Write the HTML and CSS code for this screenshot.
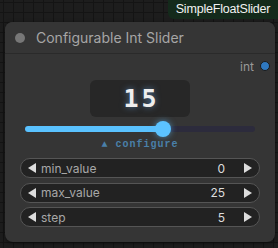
FILE: index.html
```html
<!DOCTYPE html>
<html>
<head>
<meta charset="utf-8">
<link rel="stylesheet" href="styles.css">
</head>
<body>
<div class="canvas">
  <div class="badge">SimpleFloatSlider</div>
  <div class="node">
    <div class="title">
      <span class="title-dot"></span>
      <span class="title-text">Configurable Int Slider</span>
    </div>
    <div class="body">
      <div class="output">
        <span class="output-label">int</span>
        <span class="output-dot"></span>
      </div>
      <div class="display"><span class="display-value">15</span></div>
      <div class="slider">
        <div class="track">
          <div class="fill" style="width: 60%"><span class="thumb"></span></div>
        </div>
      </div>
      <div class="configure">▲ configure</div>
      <div class="widgets">
        <div class="widget">
          <span class="arrow left"></span>
          <span class="w-label">min_value</span>
          <span class="w-value">0</span>
          <span class="arrow right"></span>
        </div>
        <div class="widget">
          <span class="arrow left"></span>
          <span class="w-label">max_value</span>
          <span class="w-value">25</span>
          <span class="arrow right"></span>
        </div>
        <div class="widget">
          <span class="arrow left"></span>
          <span class="w-label">step</span>
          <span class="w-value">5</span>
          <span class="arrow right"></span>
        </div>
      </div>
    </div>
  </div>
</div>
</body>
</html>
```

FILE: styles.css
```css
html, body {
  margin: 0;
  padding: 0;
}
body {
  width: 278px;
  height: 248px;
  overflow: hidden;
  font-family: "Liberation Sans", Arial, sans-serif;
}
.canvas {
  position: relative;
  width: 278px;
  height: 248px;
  background-color: #1d1d1d;
  background-image:
    linear-gradient(to right, #141414 1px, transparent 1px),
    linear-gradient(to bottom, #141414 1px, transparent 1px);
  background-size: 10px 10px;
  background-position: 3px 2px;
  padding-top: 22px;
  padding-left: 5px;
  box-sizing: border-box;
}
.badge {
  position: absolute;
  top: 0;
  right: 0;
  width: 110px;
  height: 19px;
  background: #142a1b;
  color: #f2f2f2;
  font-size: 12.5px;
  line-height: 19px;
  text-align: center;
  border-bottom-left-radius: 6px;
  letter-spacing: -0.2px;
}
.node {
  width: 270px;
  height: 220px;
  background: #353535;
  border-radius: 8px;
  box-shadow: 0 1px 4px rgba(0,0,0,0.5);
  overflow: hidden;
}
.title {
  height: 31px;
  display: flex;
  align-items: center;
  border-bottom: 1px solid #2a2a2a;
  background: #353535;
}
.title-dot {
  width: 10px;
  height: 10px;
  border-radius: 50%;
  background: #777;
  margin-left: 10px;
}
.title-text {
  margin-left: 11px;
  color: #a6a6a6;
  font-family: Inter, "Liberation Sans", sans-serif;
  font-size: 14px;
}
.body {
  display: flex;
  flex-direction: column;
}
.output {
  height: 14px;
  margin-top: 5px;
  display: flex;
  justify-content: flex-end;
  align-items: center;
  padding-right: 5px;
}
.output-label {
  color: #999;
  font-size: 12px;
  font-family: Inter, "Liberation Sans", sans-serif;
}
.output-dot {
  width: 8px;
  height: 8px;
  border-radius: 50%;
  background: #2f78bf;
  border: 1px solid #1a1a1a;
  margin-left: 6px;
}
.display {
  align-self: center;
  width: 100px;
  height: 37px;
  margin-top: 7px;
  background: #272727;
  border-radius: 6px;
  display: flex;
  align-items: center;
  justify-content: center;
}
.display-value {
  font-family: "DejaVu Sans Mono", monospace;
  font-weight: bold;
  font-size: 25px;
  letter-spacing: 3px;
  margin-right: -3px;
  color: #eeeeee;
  text-shadow: 0 0 6px rgba(110, 180, 255, 0.55);
}
.slider {
  height: 16px;
  margin-top: 4px;
  padding-left: 20px;
  display: flex;
  align-items: center;
}
.track {
  width: 230px;
  height: 6px;
  border-radius: 3px;
  background: #2c2b3c;
}
.fill {
  position: relative;
  height: 6px;
  border-radius: 3px;
  background: #5ac2ff;
}
.thumb {
  position: absolute;
  right: -8px;
  top: -5px;
  width: 16px;
  height: 16px;
  border-radius: 50%;
  background: #5cc3ff;
  box-shadow: 0 0 6px rgba(90, 190, 255, 0.6);
}
.configure {
  margin-top: 2px;
  height: 12px;
  line-height: 12px;
  text-align: center;
  font-family: "Liberation Mono", "Courier New", monospace;
  font-weight: bold;
  font-size: 10px;
  letter-spacing: 1px;
  color: #4a80aa;
}
.widgets {
  margin-top: 7px;
  padding: 0 15px;
  display: flex;
  flex-direction: column;
  gap: 4.5px;
}
.widget {
  height: 20px;
  box-sizing: border-box;
  border: 1px solid #555;
  border-radius: 10px;
  background: #222;
  display: flex;
  align-items: center;
  padding: 0 7px;
  font-family: Inter, "Liberation Sans", sans-serif;
  font-size: 12px;
}
.arrow {
  width: 0;
  height: 0;
  border-top: 5px solid transparent;
  border-bottom: 5px solid transparent;
}
.arrow.left {
  border-right: 8px solid #ddd;
}
.arrow.right {
  border-left: 8px solid #ddd;
}
.w-label {
  margin-left: 5px;
  color: #a8a8a8;
  flex: 1;
}
.w-value {
  color: #ddd;
  margin-right: 19px;
}
```
